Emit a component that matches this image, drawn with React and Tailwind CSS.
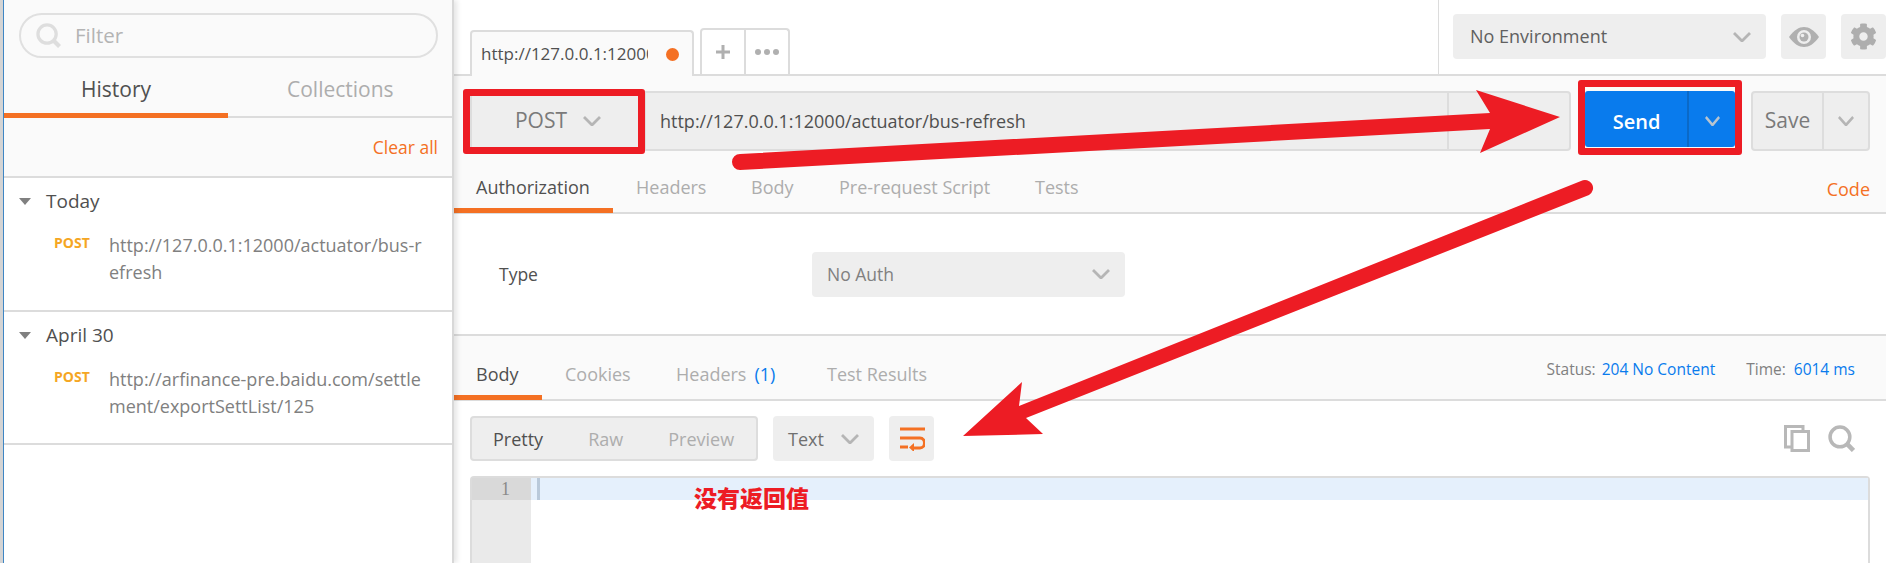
import React from 'react';
import { FaCog } from 'react-icons/fa';

function Chevron({ className = 'w-[18px] h-[10px]', color = '#b5b5b5' }) {
  return (
    <svg className={className} viewBox="0 0 18 10" fill="none" preserveAspectRatio="none">
      <polyline points="1,1 9,9 17,1" stroke={color} strokeWidth="2.8" />
    </svg>
  );
}

function SearchIcon({ className, color }) {
  return (
    <svg className={className} viewBox="0 0 26 26" fill="none">
      <circle cx="11.5" cy="11.5" r="9.5" stroke={color} strokeWidth="3.4" />
      <line x1="18.5" y1="18.5" x2="24.5" y2="24.5" stroke={color} strokeWidth="4.4" />
    </svg>
  );
}

function Caret() {
  return <div className="w-0 h-0 border-l-[6px] border-r-[6px] border-t-[7px] border-l-transparent border-r-transparent border-t-[#808080]" />;
}

function HistoryGroup({ title, line1, line2, className }) {
  return (
    <div className={`border-b-2 border-[#dcdcdc] ${className}`}>
      <div className="flex items-center h-[24px]">
        <div className="ml-[15px] w-[27px]"><Caret /></div>
        <span className="text-[19px] text-[#505050]">{title}</span>
      </div>
      <div className="flex mt-[19px]">
        <span className="ml-[50px] w-[55px] text-[14px] font-bold text-[#f5a623] leading-[27px] -mt-[3px]">POST</span>
        <div className="text-[18px] leading-[27px] text-[#808080]">
          <div>{line1}</div>
          <div>{line2}</div>
        </div>
      </div>
    </div>
  );
}

function Sidebar() {
  return (
    <div className="relative z-10 w-[454px] shrink-0 bg-white border-l-[3px] border-[#d4d4d4] border-r-2 border-r-[#d8d8d8] shadow-[3px_0_5px_rgba(0,0,0,0.10)]">
      <div className="h-full border-l border-[#3f86c4]">
        <div className="bg-[#fafafa] h-[178px] border-b-2 border-[#dcdcdc]">
          <div className="pt-[13px] pl-[15px] pr-[14px]">
            <div className="flex items-center h-[45px] rounded-full border-2 border-[#e0e0e0] pl-[15px]">
              <SearchIcon className="w-[25px] h-[25px]" color="#dedede" />
              <span className="ml-[14px] text-[20.500px] text-[#b4b4b4]">Filter</span>
            </div>
          </div>
          <div className="flex h-[60px] border-b-2 border-[#dcdcdc]">
            <div className="w-[224px] border-b-[5px] border-[#f47023] -mb-[2px] pt-[17px] pl-[77px] text-[21px] leading-[28px] text-[#505050]">History</div>
            <div className="pt-[17px] pl-[59px] text-[21px] leading-[28px] text-[#adadad]">Collections</div>
          </div>
          <div className="flex justify-end pr-[14px] pt-[17px] text-[17.500px] leading-[24px] text-[#f47023]">Clear all</div>
        </div>
        <HistoryGroup className="pt-[11px] h-[134px]" title="Today" line1="http://127.0.0.1:12000/actuator/bus-r" line2="efresh" />
        <HistoryGroup className="pt-[11px] h-[133px]" title="April 30" line1="http://arfinance-pre.baidu.com/settle" line2="ment/exportSettList/125" />
      </div>
    </div>
  );
}

function TopBar() {
  return (
    <div className="flex h-[76px] border-b-2 border-[#dcdcdc]">
      <div className="flex flex-1 items-end pl-[16px]">
        <div className="flex items-center w-[224px] h-[46px] -mb-[2px] bg-[#fafafa] border-2 border-b-0 border-[#dcdcdc] rounded-t-[4px] pl-[9px]">
          <span className="w-[167px] overflow-hidden whitespace-nowrap text-[17px] text-[#505050]">http://127.0.0.1:12000</span>
          <span className="ml-[18px] w-[13px] h-[13px] rounded-full bg-[#f47023]" />
        </div>
        <div className="flex ml-[6px] h-[46px] border-2 border-b-0 border-[#dcdcdc] rounded-t-[4px]">
          <div className="flex items-center justify-center w-[44px] border-r-2 border-[#dcdcdc] text-[#b0b0b0]">
            <svg className="w-[14px] h-[14px]" viewBox="0 0 14 14"><path d="M5.5 0h3v5.5H14v3H8.500V14h-3V8.500H0v-3h5.500z" fill="#b0b0b0" /></svg>
          </div>
          <div className="flex items-center justify-center gap-[3px] w-[42px]">
            <span className="w-[6px] h-[6px] rounded-full bg-[#b0b0b0]" />
            <span className="w-[6px] h-[6px] rounded-full bg-[#b0b0b0]" />
            <span className="w-[6px] h-[6px] rounded-full bg-[#b0b0b0]" />
          </div>
        </div>
      </div>
      <div className="flex w-[448px] border-l border-[#dcdcdc] pl-[14px] pt-[14px]">
        <div className="flex items-center justify-between w-[315px] h-[45px] rounded-[4px] bg-[#eeeeee] pl-[17px] pr-[15px] text-[18px] text-[#606060]">
          No Environment
          <Chevron />
        </div>
        <div className="flex items-center justify-center ml-[15px] w-[45px] h-[45px] rounded-[4px] bg-[#eeeeee]">
          <svg className="w-[30px] h-[20px]" viewBox="0 0 30 20">
            <path d="M0 10C5 3 10 0 15 0s10 3 15 10c-5 7-10 10-15 10S5 17 0 10z" fill="#b0b0b0" />
            <circle cx="15" cy="10" r="7" fill="#eeeeee" />
            <circle cx="15" cy="10" r="4.5" fill="#b0b0b0" />
            <circle cx="13.500" cy="8.500" r="1.800" fill="#eeeeee" />
          </svg>
        </div>
        <div className="flex items-center justify-center ml-[15px] w-[45px] h-[45px] rounded-[4px] bg-[#eeeeee]">
          <FaCog className="w-[27px] h-[27px] text-[#aeaeae]" />
        </div>
      </div>
    </div>
  );
}

function RequestBar() {
  return (
    <div className="flex pt-[15px] pl-[16px] pr-[16px]">
      <div className="flex flex-1 h-[60px] rounded-[4px] border-2 border-[#dddddd] bg-[#eeeeee]">
        <div className="flex items-center justify-center gap-[16px] w-[174px] border-r-2 border-[#dddddd] text-[21px] font-medium text-[#7a7a7a]">
          POST
          <Chevron />
        </div>
        <div className="flex items-center flex-1 pl-[14px] text-[18px] text-[#505050]">http://127.0.0.1:12000/actuator/bus-refresh</div>
        <div className="w-[122px] border-l-2 border-[#dddddd]" />
      </div>
      <div className="flex ml-[14px] w-[150px] h-[56px] rounded-[3px] bg-[#097bed] text-white">
        <div className="flex items-center justify-center w-[104px] border-r-2 border-[#0b69c7] pt-[6px] pl-[1px] text-[20px] font-semibold">Send</div>
        <div className="flex items-center justify-center flex-1 pt-[4px]"><Chevron className="w-[15px] h-[10px]" color="#b8c4cf" /></div>
      </div>
      <div className="flex ml-[16px] w-[119px] h-[60px] rounded-[4px] border-2 border-[#dddddd] bg-[#eeeeee]">
        <div className="flex items-center justify-center w-[71px] border-r-2 border-[#dddddd] text-[21px] font-medium text-[#7a7a7a]">Save</div>
        <div className="flex items-center justify-center flex-1"><Chevron className="w-[16px] h-[10px]" /></div>
      </div>
    </div>
  );
}

function Tab({ label, active, size, children }) {
  return (
    <div
      className={`border-b-[5px] ${active ? 'border-[#f47023] text-[#505050]' : 'border-transparent text-[#adadad]'} shrink-0 ${size} text-[18px] flex items-center`}
    >
      {label}{children}
    </div>
  );
}

function App() {
  return (
    <div className="relative flex w-[1886px] h-[563px] overflow-hidden bg-white font-['Open_Sans',sans-serif]">
      <Sidebar />
      <div className="flex-1 min-w-0">
        <TopBar />
        <div className="bg-[#fafafa]">
          <RequestBar />
          <div className="flex mt-[1px] h-[62px] border-b-2 border-[#dcdcdc] pr-[16px]">
            <Tab label="Authorization" active size="h-[61px] pt-[14px] w-[159px] pl-[22px]" />
            <Tab label="Headers" size="h-[61px] pt-[14px] w-[138px] pl-[23px]" />
            <Tab label="Body" size="h-[61px] pt-[14px] w-[88px]" />
            <Tab label="Pre-request Script" size="h-[61px] pt-[14px] w-[196px]" />
            <Tab label="Tests" size="h-[61px] pt-[14px] w-[80px]" />
            <div className="ml-auto flex items-center pt-[15px] text-[18px] text-[#f47023]">Code</div>
          </div>
        </div>
        <div className="flex items-center h-[120px]">
          <span className="ml-[45px] w-[313px] text-[17.500px] text-[#505050]">Type</span>
          <div className="flex items-center justify-between w-[313px] h-[45px] rounded-[4px] bg-[#eeeeee] pl-[15px] pr-[15px] text-[17.500px] text-[#808080]">
            No Auth
            <Chevron />
          </div>
        </div>
        <div className="bg-[#fafafa] border-t-2 border-[#dcdcdc]">
          <div className="flex h-[65px] border-b-2 border-[#dcdcdc] pr-[31px]">
            <Tab label="Body" active size="h-[64px] pt-[18px] w-[88px] pl-[22px]" />
            <Tab label="Cookies" size="h-[64px] pt-[18px] w-[134px] pl-[23px]" />
            <Tab label="Headers" size="h-[64px] pt-[18px] w-[151px]">
              <span className="ml-[8px] text-[#097bed]">(1)</span>
            </Tab>
            <Tab label="Test Results" size="h-[64px] pt-[18px] w-[120px]" />
            <div className="ml-auto flex items-center pb-[2px] pt-[6px] text-[15.500px] text-[#808080]">
              Status:<span className="ml-[6px] text-[#097bed]">204 No Content</span>
              <span className="ml-[31px]">Time:</span><span className="ml-[8px] text-[#097bed]">6014 ms</span>
            </div>
          </div>
        </div>
        <div className="flex items-start pt-[15px] pl-[16px] pr-[31px] h-[75px]">
          <div className="flex items-center w-[288px] h-[45px] rounded-[4px] border-2 border-[#dddddd] bg-[#eeeeee] pt-[2px] text-[18px] text-[#adadad]">
            <span className="ml-[21px] text-[#505050]">Pretty</span>
            <span className="ml-[45px]">Raw</span>
            <span className="ml-[45px]">Preview</span>
          </div>
          <div className="flex items-center justify-between ml-[15px] w-[101px] h-[45px] rounded-[4px] bg-[#eeeeee] pl-[15px] pr-[15px] text-[18px] text-[#707070]">
            <span className="pt-[2px]">Text</span>
            <Chevron />
          </div>
          <div className="flex items-center justify-center ml-[15px] w-[45px] h-[45px] rounded-[4px] bg-[#eeeeee]">
            <svg className="w-[26px] h-[24px]" viewBox="0 0 26 24" fill="none" stroke="#f47023" strokeWidth="3">
              <path d="M1 2h25M1 11h20c6 0 6 10 0 10h-7M1 20h8" />
              <path d="M15 16v9l-5-4.500z" fill="#f47023" stroke="none" />
            </svg>
          </div>
          <div className="ml-auto flex items-center gap-[18px] pt-[9px]">
            <svg className="w-[26px] h-[27px]" viewBox="0 0 26 27" fill="none" stroke="#b8b8b8" strokeWidth="3">
              <path d="M8 22H1.500V1.500H19V6" />
              <rect x="8" y="6.500" width="16.500" height="19" />
            </svg>
            <SearchIcon className="w-[27px] h-[27px]" color="#b8b8b8" />
          </div>
        </div>
        <div className="ml-[16px] mr-[16px] h-[100px] rounded-t-[4px] border-2 border-b-0 border-[#dcdcdc]">
          <div className="flex h-[22px] bg-[#e5f0fc]">
            <div className="w-[59px] bg-[#d9d9d9] pr-[21px] text-right text-[18px] leading-[22px] text-[#8a8a8a] font-['Liberation_Serif',serif]">1</div>
            <div className="ml-[6px] w-[3px] bg-[#b9c9da]" />
          </div>
          <div className="w-[59px] h-full bg-[#eaeaea]" />
        </div>
      </div>

      {/* annotations drawn over the app */}
      <div className="absolute left-[463px] top-[89px] w-[182px] h-[65px] rounded-[3px] border-[7px] border-[#ed1c24]" />
      <div className="absolute left-[1578px] top-[80px] w-[164px] h-[75px] rounded-[3px] border-[7px] border-[#ed1c24]" />
      <svg className="absolute left-0 top-0 w-[1886px] h-[563px] pointer-events-none" viewBox="0 0 1886 563">
        <path d="M740 154 L1490 113 L1476 90 L1560 117 L1480 153 L1490 129 L740 170 A8 8 0 0 1 740 154 Z" fill="#ed1c24" />
        <path d="M1581 181 L1019 406 L1022 382 L963 436 L1043 434 L1026 418 L1589 195 A8 8 0 0 0 1581 181 Z" fill="#ed1c24" />
      </svg>
      <div className="absolute left-[694px] top-[482px] text-[23px] leading-[30px] font-black text-[#ed1c24] font-['Noto_Sans_CJK_SC',sans-serif]">没有返回值</div>
    </div>
  );
}

export default App;
